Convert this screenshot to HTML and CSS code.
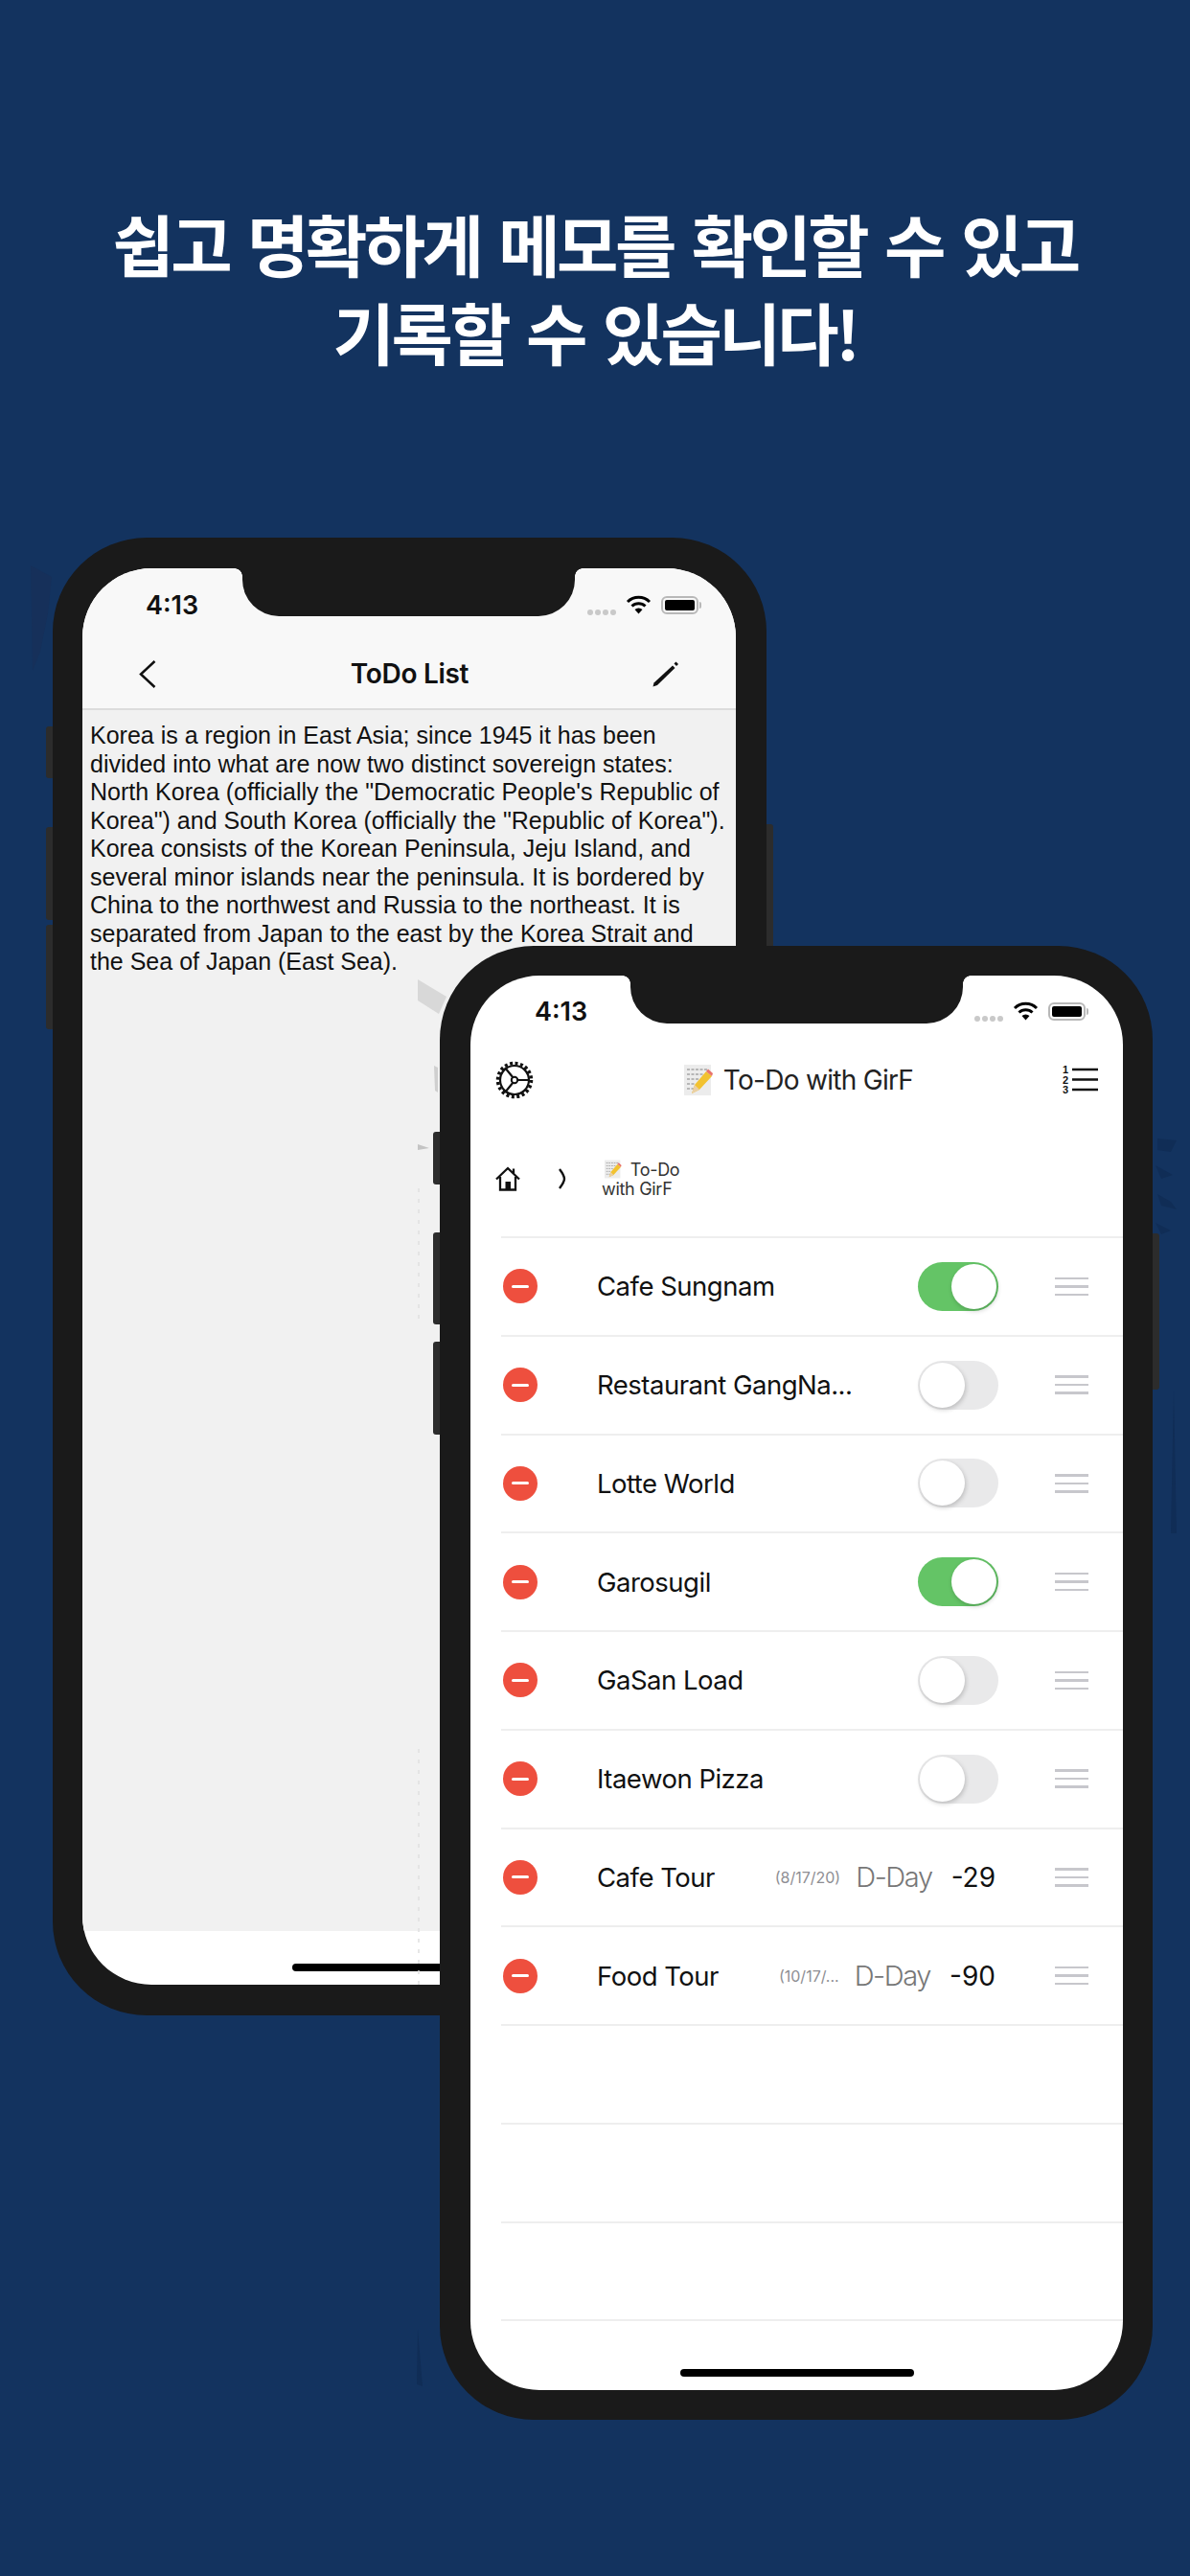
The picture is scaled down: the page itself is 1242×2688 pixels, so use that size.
FILE: index.html
```html
<!DOCTYPE html>
<html lang="ko">
<head>
  <meta charset="UTF-8">
  <title>To-Do with GirF</title>
  <link rel="stylesheet" href="styles.css">
</head>
<body>
  <div class="poster">
    <h1 class="headline">쉽고 명확하게 메모를 확인할 수 있고<br>기록할 수 있습니다!</h1>

    <!-- smudges left over around the phones -->
    <svg class="smudges" width="1242" height="2688" viewBox="0 0 1242 2688">
      <path d="M32 590 L54 602 L50 640 L42 680 L34 700 Z" fill="#16305a"/>
      <path d="M1208 1188 L1228 1190 L1222 1202 L1208 1200 Z M1206 1216 L1224 1226 L1212 1230 Z M1208 1246 L1222 1254 L1228 1262 L1212 1258 Z M1206 1276 L1222 1284 L1212 1288 Z" fill="#102d56"/>
      <path d="M1225 1450 L1228 1600 L1222 1600 Z" fill="#102d56"/>
      <path d="M436 2430 L441 2490 L435 2488 Z" fill="#102d56"/>
    </svg>

    <div class="phone phone-back">
      <span class="side-btn mute"></span>
      <span class="side-btn vol-up"></span>
      <span class="side-btn vol-down"></span>
      <span class="side-btn power"></span>
      <div class="screen">
        <div class="notch"></div>
        <div class="memo-top">
          <div class="status">
            <span class="time">4:13</span>
            <div class="status-icons">
              <span class="signal"><i></i><i></i><i></i><i></i></span>
              <svg class="wifi" width="27" height="20" viewBox="0 0 27 20"><path d="M2 7a16.500 16.500 0 0 1 23 0M6.500 11.500a10 10 0 0 1 14 0" fill="none" stroke="#000" stroke-width="3"/><path d="M13.500 19.500l-4-4.500a6 6 0 0 1 8 0z" fill="#000"/></svg>
              <span class="battery"><b></b></span>
            </div>
          </div>
          <div class="memo-nav">
            <svg class="memo-back" width="18" height="29" viewBox="0 0 18 29"><path d="M16.500 1L2 14.500 16.500 28" fill="none" stroke="#111" stroke-width="2.500"/></svg>
            <span class="memo-title">ToDo List</span>
            <svg width="30" height="29" viewBox="0 0 30 29"><path d="M1.500 27.500L2.500 23.500 22 5.500 24.500 8 6 26z" fill="#111"/><path d="M23.500 3.500l2-2 2.500 2.500-2 2z" fill="#111"/></svg>
          </div>
        </div>
        <p class="memo-text">Korea is a region in East Asia; since 1945 it has been divided into what are now two distinct sovereign states: North Korea (officially the "Democratic People's Republic of Korea") and South Korea (officially the "Republic of Korea"). Korea consists of the Korean Peninsula, Jeju Island, and several minor islands near the peninsula. It is bordered by China to the northwest and Russia to the northeast. It is separated from Japan to the east by the Korea Strait and the Sea of Japan (East Sea).</p>
        <div class="home-bar"></div>
      </div>
    </div>

    <!-- ghost marks on the back phone's screen -->
    <svg class="smudges" width="1242" height="2688" viewBox="0 0 1242 2688">
      <path d="M436 1022 L466 1040 L458 1058 L436 1044 Z" fill="#d8d8d8"/>
      <path d="M453 1112 L457 1114 L457 1140 L454 1138 Z" fill="#cfcfcf"/>
      <path d="M436 1194 L448 1198 L436 1200 Z" fill="#c4c4c4"/>
      <path d="M437 1240 V1380 M437 1825 V2071" fill="none" stroke="#e0e0e0" stroke-width="1.500" stroke-dasharray="4 7"/>
    </svg>

    <div class="phone phone-front">
      <span class="side-btn mute"></span>
      <span class="side-btn vol-up"></span>
      <span class="side-btn vol-down"></span>
      <span class="side-btn power"></span>
      <div class="screen">
        <div class="notch"></div>
        <div class="status">
          <span class="time">4:13</span>
          <div class="status-icons">
            <span class="signal"><i></i><i></i><i></i><i></i></span>
            <svg class="wifi" width="27" height="20" viewBox="0 0 27 20"><path d="M2 7a16.500 16.500 0 0 1 23 0M6.500 11.500a10 10 0 0 1 14 0" fill="none" stroke="#000" stroke-width="3"/><path d="M13.500 19.500l-4-4.500a6 6 0 0 1 8 0z" fill="#000"/></svg>
            <span class="battery"><b></b></span>
          </div>
        </div>

        <div class="app-nav">
          <svg class="gear" width="40" height="40" viewBox="0 0 40 40">
            <circle cx="20" cy="20" r="17.500" fill="none" stroke="#111" stroke-width="3.500" stroke-dasharray="3 2.500"/>
            <circle cx="20" cy="20" r="15" fill="#fff" stroke="#111" stroke-width="2.200"/>
            <path d="M23 20H35M18.500 17.500L10 7M18.500 22.500L10 33" stroke="#111" stroke-width="2.200"/>
            <circle cx="20" cy="20" r="3.200" fill="#fff" stroke="#111" stroke-width="2"/>
          </svg>
          <div class="app-title">
            <svg width="31" height="34" viewBox="0 0 31 34">
              <rect x="1" y="1" width="28" height="32" fill="#ececec"/>
              <path d="M4 6h21M4 11h18M4 16h12M4 21h9M4 26h7" stroke="#a5a5a5" stroke-width="1.500" stroke-dasharray="3 1.500"/>
              <path d="M9 31l3-9L24 8l6 5-13 14z" fill="#f2c230"/>
              <path d="M24 8l2-2.500 5 4.500-1 3z" fill="#e8736c"/>
              <path d="M9 31l3-9 5 5z" fill="#e9cfa6"/>
            </svg>
            <span>To-Do with GirF</span>
          </div>
          <svg class="num-list" width="37" height="36" viewBox="0 0 37 36">
            <text x="0" y="11" class="num-list-text">1</text>
            <text x="0" y="22" class="num-list-text">2</text>
            <text x="0" y="32" class="num-list-text">3</text>
            <path d="M10 7H37M10 17.500H37M10 28H37" stroke="#111" stroke-width="2.500"/>
          </svg>
        </div>

        <div class="crumbs">
          <svg width="26" height="26" viewBox="0 0 26 26"><path d="M1 13.500L13 2l12 11.500M5 11v13.500h16V11M19 7V2.500" fill="none" stroke="#111" stroke-width="2.300"/><rect x="10.500" y="16" width="5.500" height="8.500" fill="#111"/></svg>
          <svg class="crumb-arrow" width="9" height="22" viewBox="0 0 9 22"><path d="M2 1c3 4 5 7 5 10s-2 6-5 10" fill="none" stroke="#111" stroke-width="2.400"/></svg>
          <div class="crumb-text">
            <svg width="19" height="20" viewBox="0 0 31 34">
              <rect x="1" y="1" width="28" height="32" fill="#ececec"/>
              <path d="M4 6h21M4 11h18M4 16h12M4 21h9M4 26h7" stroke="#a5a5a5" stroke-width="1.500" stroke-dasharray="3 1.500"/>
              <path d="M9 31l3-9L24 8l6 5-13 14z" fill="#f2c230"/>
              <path d="M24 8l2-2.500 5 4.500-1 3z" fill="#e8736c"/>
              <path d="M9 31l3-9 5 5z" fill="#e9cfa6"/>
            </svg>
            To-Do<br>with GirF
          </div>
        </div>

        <ul class="todo-list">
          <li class="row">
            <span class="minus"></span>
            <span class="label">Cafe Sungnam</span>
            <span class="toggle on"></span>
            <span class="handle"><i></i><i></i><i></i></span>
          </li>
          <li class="row">
            <span class="minus"></span>
            <span class="label">Restaurant GangNa...</span>
            <span class="toggle"></span>
            <span class="handle"><i></i><i></i><i></i></span>
          </li>
          <li class="row">
            <span class="minus"></span>
            <span class="label">Lotte World</span>
            <span class="toggle"></span>
            <span class="handle"><i></i><i></i><i></i></span>
          </li>
          <li class="row">
            <span class="minus"></span>
            <span class="label">Garosugil</span>
            <span class="toggle on"></span>
            <span class="handle"><i></i><i></i><i></i></span>
          </li>
          <li class="row">
            <span class="minus"></span>
            <span class="label">GaSan Load</span>
            <span class="toggle"></span>
            <span class="handle"><i></i><i></i><i></i></span>
          </li>
          <li class="row">
            <span class="minus"></span>
            <span class="label">Itaewon Pizza</span>
            <span class="toggle"></span>
            <span class="handle"><i></i><i></i><i></i></span>
          </li>
          <li class="row">
            <span class="minus"></span>
            <span class="label">Cafe Tour</span>
            <span class="date">(8/17/20)</span>
            <span class="dday">D-Day</span>
            <span class="count">-29</span>
            <span class="handle"><i></i><i></i><i></i></span>
          </li>
          <li class="row">
            <span class="minus"></span>
            <span class="label">Food Tour</span>
            <span class="date">(10/17/...</span>
            <span class="dday">D-Day</span>
            <span class="count">-90</span>
            <span class="handle"><i></i><i></i><i></i></span>
          </li>
          <li class="row"></li>
          <li class="row"></li>
          <li class="row"></li>
        </ul>
        <div class="home-bar"></div>
      </div>
    </div>
  </div>
</body>
</html>
```

FILE: styles.css
```css
body {
  margin: 0;
  background: #13335f;
  font-family: Inter, "Noto Sans CJK KR", sans-serif;
}

.poster {
  position: relative;
  width: 1242px;
  height: 2688px;
  overflow: hidden;
}

.headline {
  margin: 0;
  padding-top: 208px;
  color: #fff;
  font-family: "Noto Sans CJK KR", sans-serif;
  font-size: 70px;
  font-weight: 700;
  letter-spacing: -3.600px;
  word-spacing: 3px;
  line-height: 92px;
  text-align: center;
}

.smudges {
  position: absolute;
  left: 0;
  top: 0;
}

/* phones */
.phone {
  position: absolute;
  box-sizing: border-box;
  width: 745px;
  padding: 32px;
  background: #1a1a1a;
  border-radius: 98px;
}

.phone-back {
  left: 55px;
  top: 561px;
  height: 1542px;
  padding-left: 31px;
}

.phone-front {
  left: 459px;
  top: 987px;
  width: 744px;
  height: 1538px;
  padding: 31px 31px 31px 32px;
}

.side-btn {
  position: absolute;
  width: 7px;
  left: -7px;
  background: #2c2c2c;
  border-radius: 3px 0 0 3px;
}

.phone-back .mute { top: 197px; height: 54px; }
.phone-back .vol-up { top: 302px; height: 97px; }
.phone-back .vol-down { top: 404px; height: 109px; }
.phone-back .power { left: auto; right: -7px; top: 299px; height: 164px; border-radius: 0 3px 3px 0; }

.phone-front .mute { top: 194px; height: 55px; }
.phone-front .vol-up { top: 299px; height: 96px; }
.phone-front .vol-down { top: 413px; height: 97px; }
.phone-front .power { left: auto; right: -7px; top: 300px; height: 163px; border-radius: 0 3px 3px 0; }

.screen {
  position: relative;
  display: flex;
  flex-direction: column;
  height: 100%;
  background: #fff;
  border-radius: 72px;
  overflow: hidden;
}

.notch {
  position: absolute;
  left: 167px;
  top: 0;
  width: 347px;
  height: 50px;
  background: #1a1a1a;
  border-radius: 0 0 38px 38px;
}

.notch::before,
.notch::after {
  content: "";
  position: absolute;
  top: 0;
  width: 8px;
  height: 8px;
}

.notch::before {
  left: -8px;
  background: radial-gradient(circle at 0 100%, transparent 7.500px, #1a1a1a 8px);
}

.notch::after {
  right: -8px;
  background: radial-gradient(circle at 100% 100%, transparent 7.500px, #1a1a1a 8px);
}

.home-bar {
  position: absolute;
  left: 50%;
  bottom: 14px;
  width: 244px;
  height: 8px;
  margin-left: -122px;
  background: #000;
  border-radius: 4px;
}

/* status bar */
.status {
  display: flex;
  align-items: center;
  justify-content: space-between;
  height: 76px;
  padding: 0 35px 0 66px;
}

.phone-front .status {
  height: 74px;
  padding: 0 35px 0 67px;
}

.time {
  font-size: 27px;
  font-weight: 600;
  color: #111;
}

.status-icons {
  display: flex;
  align-items: center;
  gap: 10px;
}

.signal {
  display: flex;
  gap: 2px;
  margin-top: 15px;
}

.signal i {
  width: 6px;
  height: 6px;
  background: #c9c9c9;
  border-radius: 50%;
}

.battery {
  position: relative;
  box-sizing: border-box;
  width: 39px;
  height: 19px;
  padding: 2px;
  margin-right: 4px;
  border: 2px solid #b8b8b8;
  border-radius: 6px;
}

.battery::after {
  content: "";
  position: absolute;
  right: -5px;
  top: 4px;
  width: 2px;
  height: 7px;
  background: #b8b8b8;
  border-radius: 0 2px 2px 0;
}

.battery b {
  display: block;
  height: 100%;
  background: #000;
  border-radius: 2px;
}

/* memo screen */
.memo-top {
  background: #f8f8f8;
  border-bottom: 2px solid #dcdcdc;
}

.memo-nav {
  display: flex;
  align-items: center;
  justify-content: space-between;
  height: 68px;
  padding: 0 58px 2px 59px;
}

.memo-back {
  margin-right: 12px;
}

.memo-title {
  font-size: 28px;
  font-weight: 600;
  letter-spacing: -0.300px;
  color: #111;
}

.memo-text {
  flex: 1;
  margin: 0 0 56px;
  padding: 12px 10px 0 8px;
  background: #f1f1f1;
  color: #111;
  font-family: "Liberation Sans", sans-serif;
  font-size: 25px;
  line-height: 29.500px;
}

/* list screen */
.app-nav {
  display: flex;
  align-items: center;
  justify-content: space-between;
  height: 70px;
  padding: 0 26px;
}

.app-title {
  display: flex;
  align-items: center;
  gap: 11px;
  font-size: 28px;
  letter-spacing: -0.700px;
  color: #222;
}

.num-list-text {
  font-family: "Liberation Sans", sans-serif;
  font-size: 11px;
  font-weight: 700;
  fill: #111;
}

.crumbs {
  display: flex;
  align-items: center;
  gap: 42px;
  height: 120px;
  padding: 8px 0 0 26px;
}

.crumb-arrow {
  margin-left: -3px;
}

.crumb-text {
  margin-left: -5px;
  font-size: 18px;
  letter-spacing: -0.300px;
  line-height: 19.500px;
  color: #333;
}

.crumb-text svg {
  vertical-align: -3px;
  margin-left: 2px;
  margin-right: 4px;
}

.todo-list {
  margin: 0 0 0 32px;
  padding: 0;
  list-style: none;
  border-top: 2px solid #eee;
}

.row {
  display: flex;
  align-items: center;
  box-sizing: border-box;
  height: 102.750px;
  padding-right: 36px;
  border-bottom: 2px solid #eee;
}

.minus {
  position: relative;
  flex: none;
  width: 36px;
  height: 36px;
  margin-left: 2px;
  background: #ee4f3e;
  border-radius: 50%;
}

.minus::after {
  content: "";
  position: absolute;
  left: 9px;
  top: 16.500px;
  width: 18px;
  height: 3px;
  background: #fff;
  border-radius: 2px;
}

.label {
  flex: 1;
  margin-left: 62px;
  font-size: 27.500px;
  letter-spacing: -0.500px;
  color: #111;
  white-space: nowrap;
}

.toggle {
  position: relative;
  box-sizing: border-box;
  flex: none;
  width: 84px;
  height: 51px;
  margin-right: 59px;
  background: #e9e9ea;
  border-radius: 26px;
}

.toggle::after {
  content: "";
  position: absolute;
  left: 2px;
  top: 2px;
  width: 47px;
  height: 47px;
  background: #fff;
  border-radius: 50%;
  box-shadow: 1px 2px 5px rgba(0, 0, 0, 0.2);
}

.toggle.on {
  background: #64c466;
}

.toggle.on::after {
  left: 35px;
}

.date {
  flex: none;
  font-size: 16px;
  color: #8e8e93;
}

.dday {
  flex: none;
  margin-left: 16px;
  font-size: 29px;
  font-weight: 300;
  letter-spacing: -1.400px;
  color: #777;
}

.count {
  flex: none;
  margin: 0 62px 0 20px;
  font-size: 28px;
  color: #111;
}

.handle {
  display: flex;
  flex: none;
  flex-direction: column;
  gap: 6px;
  width: 35px;
}

.handle i {
  height: 2.500px;
  background: #c7c7cc;
}
```
